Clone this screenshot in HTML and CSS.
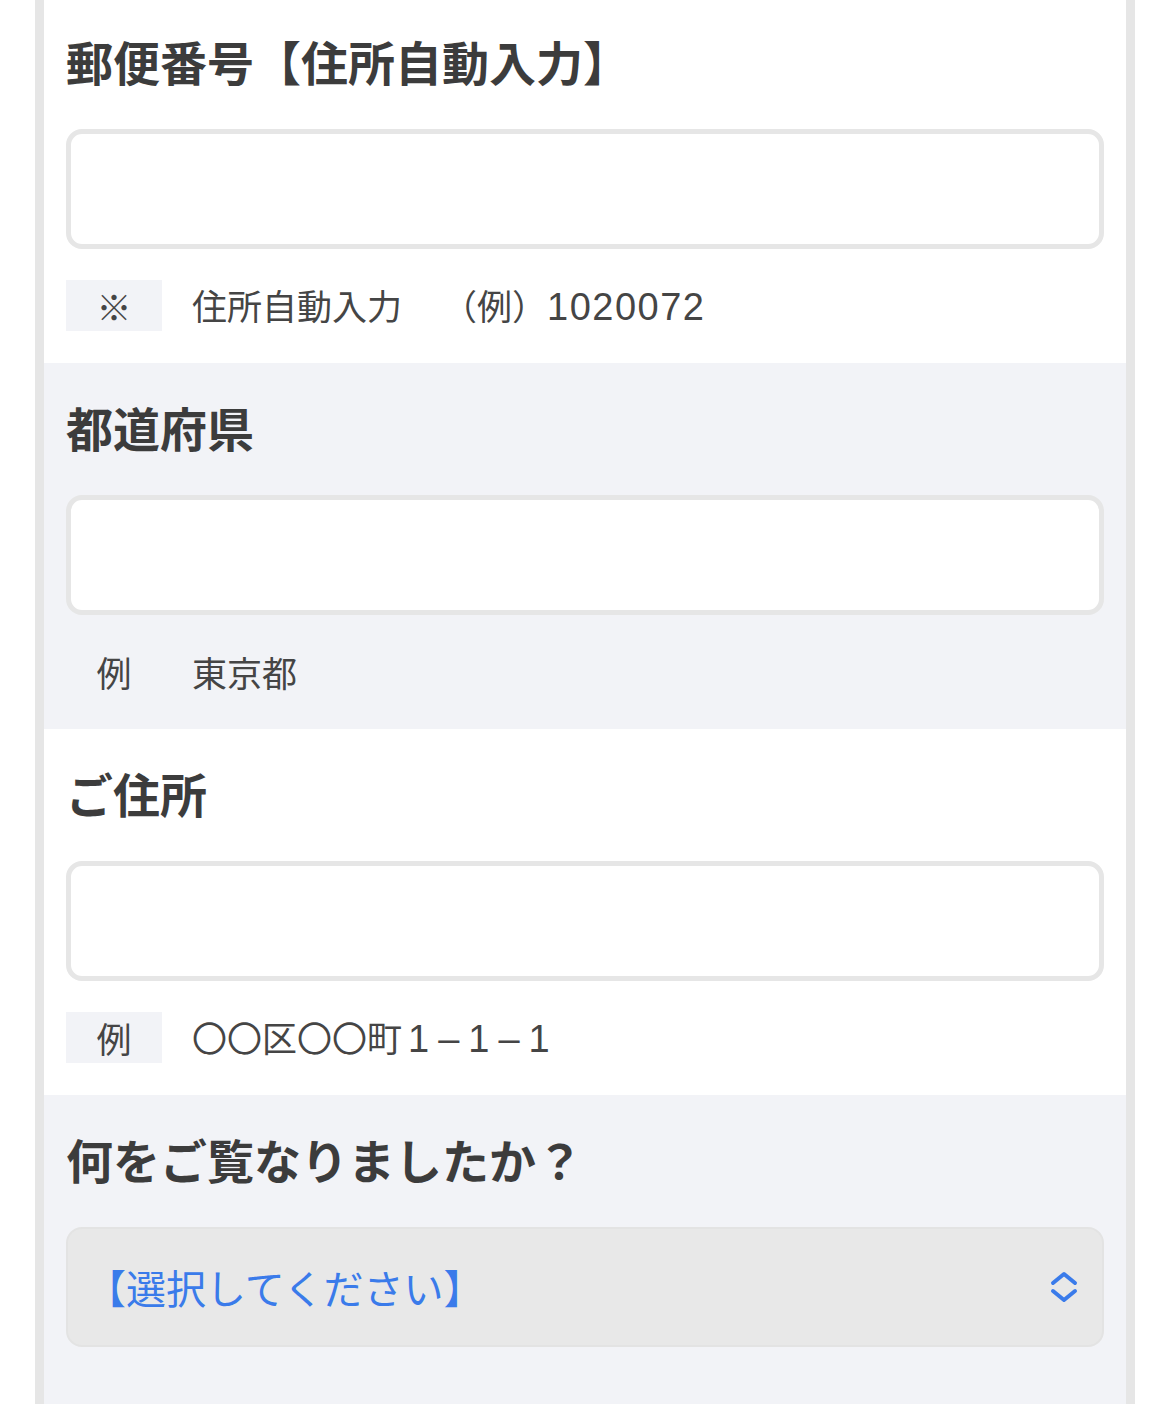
FILE: index.html
```html
<!DOCTYPE html>
<html lang="ja">
<head>
    <meta charset="UTF-8">
    <meta name="viewport" content="width=device-width, initial-scale=1.0">
    <title>お問い合わせフォーム</title>
    <link rel="stylesheet" href="styles.css">
</head>
<body>

    <div class="form-wrap">

        <!-- 郵便番号 -->
        <div class="form-row">
            <div class="form-title">郵便番号【住所自動入力】</div>
            <input type="text" class="form-input" name="zip">
            <div class="form-note">
                <span class="note-label">※</span>
                <span class="note-text">住所自動入力<span class="note-sub">（例）<span class="num">1020072</span></span></span>
            </div>
        </div>

        <!-- 都道府県 -->
        <div class="form-row gray">
            <div class="form-title">都道府県</div>
            <input type="text" class="form-input" name="pref">
            <div class="form-note">
                <span class="note-label">例</span>
                <span class="note-text">東京都</span>
            </div>
        </div>

        <!-- ご住所 -->
        <div class="form-row">
            <div class="form-title">ご住所</div>
            <input type="text" class="form-input" name="address">
            <div class="form-note">
                <span class="note-label">例</span>
                <span class="note-text">〇〇区〇〇町<span class="num spaced">1–1–1</span></span>
            </div>
        </div>

        <!-- 何をご覧なりましたか -->
        <div class="form-row gray">
            <div class="form-title">何をご覧なりましたか？</div>
            <div class="select-wrap">
                <select class="form-select" name="source">
                    <option>【選択してください】</option>
                </select>
                <svg class="select-arrow" width="28" height="32" viewBox="0 0 28 32">
                    <path d="M3 12 L14 3 L25 12" fill="none" stroke="#3a7bea" stroke-width="4" stroke-linecap="round" stroke-linejoin="round"/>
                    <path d="M3 20 L14 29 L25 20" fill="none" stroke="#3a7bea" stroke-width="4" stroke-linecap="round" stroke-linejoin="round"/>
                </svg>
            </div>
        </div>

    </div>

</body>
</html>
```

FILE: styles.css
```css
   body {
       margin: 0;
       font-family: "Noto Sans CJK JP", "Noto Sans", sans-serif;
       background-color: #ffffff;
       color: #3c3c3c;
   }

   .form-wrap {
       width: 1082px;
       margin: -3px 0 0 35px;
       border-left: 9px solid #e6e6e6;
       border-right: 9px solid #e6e6e6;
   }

   .form-row {
       display: flex;
       flex-direction: column;
       height: 366px;
       box-sizing: border-box;
       padding: 32px 22px 0 22px;
       background-color: #ffffff;
   }

   .form-row.gray {
       background-color: #f2f3f7;
   }

   .form-title {
       font-size: 47px;
       font-weight: bold;
       line-height: 64px;
       color: #3c3c3c;
   }

   .form-input {
       display: block;
       margin: 36px 0 0 0;
       width: 100%;
       height: 120px;
       box-sizing: border-box;
       border: 5px solid #e6e6e6;
       border-radius: 16px;
       background-color: #ffffff;
       outline: none;
       font-family: inherit;
       font-size: 34px;
   }

   .form-note {
       display: flex;
       align-items: center;
       gap: 30px;
       margin-top: 31px;
       height: 51px;
       font-size: 35px;
       color: #454545;
   }

   .note-label {
       display: flex;
       align-items: center;
       justify-content: center;
       width: 96px;
       height: 51px;
       background-color: #f2f3f7;
   }

   .note-text {
       line-height: 51px;
       white-space: nowrap;
   }

   .note-sub {
       margin-left: 40px;
   }

   .num {
       font-family: "Liberation Sans", Arial, sans-serif;
       font-size: 38px;
       letter-spacing: 1.5px;
   }

   .num.spaced {
       margin-left: 6px;
       letter-spacing: 9px;
   }

   .select-wrap {
       position: relative;
       margin-top: 36px;
   }

   .form-select {
       display: block;
       width: 100%;
       height: 120px;
       box-sizing: border-box;
       padding: 0 0 0 18px;
       border: 2px solid #e3e3e3;
       border-radius: 16px;
       background-color: #e8e8e8;
       color: #3a7bea;
       font-family: inherit;
       font-size: 40px;
       appearance: none;
       -webkit-appearance: none;
       outline: none;
   }

   .select-arrow {
       position: absolute;
       right: 26px;
       top: 44px;
   }
```
